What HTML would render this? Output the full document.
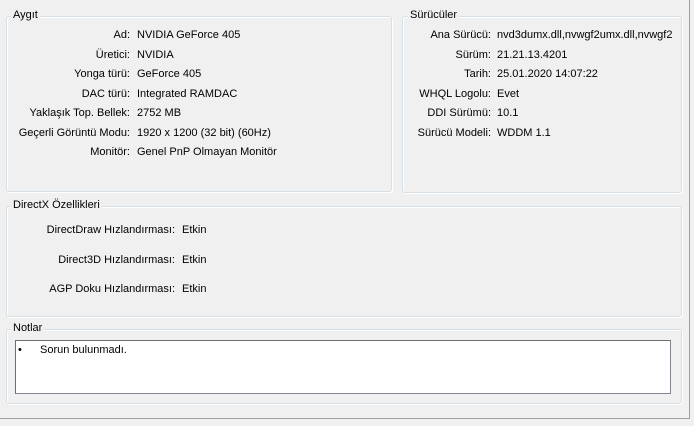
<!DOCTYPE html><html><head><style>
body{margin:0;width:694px;height:426px;background:#f0f0f0;font-family:"Liberation Sans",Arial,sans-serif;font-size:11px;color:#000;position:relative;overflow:hidden}
.g{position:absolute;border:1px solid #d5dfe5;border-radius:3px;box-shadow:inset 1px 1px 0 #fff,1px 1px 0 #fff}
.t{position:absolute;background:#f0f0f0;padding:0 2px;font-size:11px;color:#000}
.l{position:absolute;text-align:right;white-space:nowrap}
.v{position:absolute;white-space:nowrap}
</style></head><body>
<div style="position:absolute;left:689px;top:0;width:1px;height:419px;background:#a0a0a0"></div>
<div style="position:absolute;left:0;top:418px;width:690px;height:1px;background:#a0a0a0"></div>

<div class="g" style="left:6px;top:16px;width:384px;height:174px"></div>
<div class="t" style="left:11px;top:9px">Aygıt</div>
<div class="l" style="right:564px;top:29px">Ad:</div><div class="v" style="left:137px;top:29px">NVIDIA GeForce 405</div>
<div class="l" style="right:564px;top:49px">Üretici:</div><div class="v" style="left:137px;top:49px">NVIDIA</div>
<div class="l" style="right:564px;top:68px">Yonga türü:</div><div class="v" style="left:137px;top:68px">GeForce 405</div>
<div class="l" style="right:564px;top:88px">DAC türü:</div><div class="v" style="left:137px;top:88px">Integrated RAMDAC</div>
<div class="l" style="right:564px;top:107px">Yaklaşık Top. Bellek:</div><div class="v" style="left:137px;top:107px">2752 MB</div>
<div class="l" style="right:564px;top:127px">Geçerli Görüntü Modu:</div><div class="v" style="left:137px;top:127px">1920 x 1200 (32 bit) (60Hz)</div>
<div class="l" style="right:564px;top:146px">Monitör:</div><div class="v" style="left:137px;top:146px">Genel PnP Olmayan Monitör</div>

<div class="g" style="left:402px;top:16px;width:278px;height:175px"></div>
<div class="t" style="left:408px;top:9px">Sürücüler</div>
<div class="l" style="right:203px;top:29px">Ana Sürücü:</div><div class="v" style="left:497px;top:29px">nvd3dumx.dll,nvwgf2umx.dll,nvwgf2</div>
<div class="l" style="right:203px;top:49px">Sürüm:</div><div class="v" style="left:497px;top:49px">21.21.13.4201</div>
<div class="l" style="right:203px;top:68px">Tarih:</div><div class="v" style="left:497px;top:68px">25.01.2020 14:07:22</div>
<div class="l" style="right:203px;top:88px">WHQL Logolu:</div><div class="v" style="left:497px;top:88px">Evet</div>
<div class="l" style="right:203px;top:107px">DDI Sürümü:</div><div class="v" style="left:497px;top:107px">10.1</div>
<div class="l" style="right:203px;top:127px">Sürücü Modeli:</div><div class="v" style="left:497px;top:127px">WDDM 1.1</div>

<div class="g" style="left:6px;top:206px;width:674px;height:109px"></div>
<div class="t" style="left:11px;top:199px">DirectX Özellikleri</div>
<div class="l" style="right:519px;top:224px">DirectDraw Hızlandırması:</div><div class="v" style="left:182px;top:224px">Etkin</div>
<div class="l" style="right:519px;top:254px">Direct3D Hızlandırması:</div><div class="v" style="left:182px;top:254px">Etkin</div>
<div class="l" style="right:519px;top:283px">AGP Doku Hızlandırması:</div><div class="v" style="left:182px;top:283px">Etkin</div>

<div class="g" style="left:6px;top:329px;width:674px;height:73px"></div>
<div class="t" style="left:11px;top:322px">Notlar</div>
<div style="position:absolute;left:15px;top:340px;width:654px;height:52px;background:#fff;border:1px solid #828790;border-top-color:#6d6d6d;border-left-color:#6d6d6d"></div>
<div class="v" style="left:18px;top:344px">•</div>
<div class="v" style="left:40px;top:344px">Sorun bulunmadı.</div>
</body></html>
